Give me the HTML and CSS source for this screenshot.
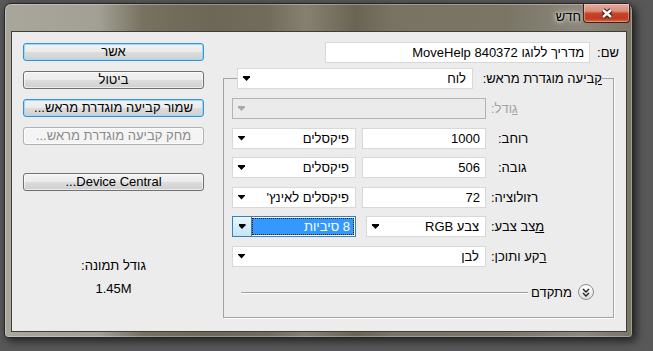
FILE: index.html
```html
<!DOCTYPE html>
<html lang="he" dir="rtl">

<head>
    <meta charset="utf-8">
    <title>חדש</title>
    <link rel="stylesheet" href="styles.css">
</head>

<body>
    <div class="window">
        <div class="titlebar">
            <button class="close" title="סגור">
                <svg width="14" height="11" viewBox="0 0 14 11">
                    <path d="M3 2l8 7M11 2l-8 7" stroke="#3b1a12" stroke-width="4.6" fill="none"/>
                    <path d="M3 2l8 7M11 2l-8 7" stroke="#fff" stroke-width="2.4" fill="none"/>
                </svg>
            </button>
            <span class="title">חדש</span>
        </div>

        <div class="client">
            <div class="panel">
                <div class="name-row">
                    <label for="name">שם:</label>
                    <input type="text" id="name" class="field name" value="מדריך ללוגו 840372 MoveHelp">
                </div>

                <fieldset class="group">
                    <legend class="preset">
                        <label><u>ק</u>ביעה מוגדרת מראש:</label>
                        <div class="select preset-select"><span class="value">לוח</span><span class="arrow"></span></div>
                    </legend>

                    <div class="rows">
                        <div class="row">
                            <label class="lbl disabled"><u>ג</u>ודל:</label>
                            <div class="fields">
                                <div class="select disabled wide"><span class="value"></span><span class="arrow"></span></div>
                            </div>
                        </div>
                        <div class="row">
                            <label class="lbl far">רוחב:</label>
                            <div class="fields">
                                <input type="text" class="field num" value="1000">
                                <div class="select unit"><span class="value">פיקסלים</span><span class="arrow"></span></div>
                            </div>
                        </div>
                        <div class="row">
                            <label class="lbl far">גובה:</label>
                            <div class="fields">
                                <input type="text" class="field num" value="506">
                                <div class="select unit"><span class="value">פיקסלים</span><span class="arrow"></span></div>
                            </div>
                        </div>
                        <div class="row">
                            <label class="lbl">רזולוציה:</label>
                            <div class="fields">
                                <input type="text" class="field num" value="72">
                                <div class="select unit"><span class="value">פיקסלים לאינץ'</span><span class="arrow"></span></div>
                            </div>
                        </div>
                        <div class="row">
                            <label class="lbl"><u>מ</u>צב צבע:</label>
                            <div class="fields">
                                <div class="select mode"><span class="value">צבע RGB</span><span class="arrow"></span></div>
                                <div class="select unit focus"><span class="value">8 סיביות</span><span class="drop"><span class="arrow"></span></span></div>
                            </div>
                        </div>
                        <div class="row">
                            <label class="lbl"><u>ר</u>קע ותוכן:</label>
                            <div class="fields">
                                <div class="select wide"><span class="value">לבן</span><span class="arrow"></span></div>
                            </div>
                        </div>
                    </div>

                    <div class="advanced">
                        <button class="more">
                            <svg width="8" height="9" viewBox="0 0 8 9">
                                <path d="M1 1l3 3 3-3M1 5l3 3 3-3" stroke="#222" stroke-width="1.4" fill="none"/>
                            </svg>
                        </button>
                        <span class="more-text">מתקדם</span>
                        <span class="rule"></span>
                    </div>
                </fieldset>
            </div>

            <div class="actions">
                <button class="btn default">אשר</button>
                <button class="btn">ביטול</button>
                <button class="btn default">שמור קביעה מוגדרת מראש...</button>
                <button class="btn disabled">מחק קביעה מוגדרת מראש...</button>
                <button class="btn device"><span dir="rtl">Device Central...</span></button>

                <div class="size-label">גודל תמונה:</div>
                <div class="size-value">1.45M</div>
            </div>
        </div>
    </div>
</body>

</html>
```

FILE: styles.css
```css
* {
    box-sizing: border-box;
}

body {
    margin: 0;
    height: 351px;
    overflow: hidden;
    background-color: #585858;
    font-family: "Liberation Sans", "DejaVu Sans", sans-serif;
    font-size: 13px;
    color: #000;
}

/* window frame */
.window {
    width: 629px;
    height: 335px;
    margin: 3px auto 0 4px;
    padding: 0 5px 5px 6px;
    display: flex;
    flex-direction: column;
    border: 1px solid #262626;
    border-radius: 7px 7px 4px 4px;
    background: linear-gradient(90deg, #a9a69c 0%, #a29f94 15%, #77725f 22%, #6c6756 33%, #716c5b 42%, #858070 48%, #6a6553 56%, #787363 62%, #7a7565 80%, #8c887b 92%, #7a7565 100%);
    box-shadow: inset 0 0 0 1px rgba(255, 255, 255, 0.3), 3px 3px 8px rgba(0, 0, 0, 0.65);
}

.titlebar {
    height: 27px;
    display: flex;
    align-items: flex-start;
    margin-right: -3px;
}

.close {
    width: 47px;
    height: 19px;
    padding: 0;
    display: flex;
    align-items: center;
    justify-content: center;
    border: 1px solid #4a1c12;
    border-top: none;
    border-radius: 0 0 4px 4px;
    background: linear-gradient(#e4ab9c 0%, #d88e7b 40%, #c8442a 52%, #c03a20 80%, #d5694c 100%);
    box-shadow: inset 0 0 0 1px rgba(255, 255, 255, 0.3);
}

.title {
    padding: 5px 2px 0 0;
    line-height: 15px;
    text-shadow: 0 0 6px #fff, 0 0 3px rgba(255, 255, 255, 0.8);
}

/* dialog body */
.client {
    flex: 1;
    display: flex;
    gap: 19px;
    padding: 10px 0 0 11px;
    background-color: #ececec;
    border: 1px solid #3f3d37;
}

.panel {
    width: 403px;
    padding-right: 7px;
}

.name-row {
    display: flex;
    align-items: center;
    gap: 7px;
    height: 21px;
}

.field {
    height: 21px;
    padding: 0 5px;
    border: 1px solid #d8d8d8;
    background-color: #fff;
    font: inherit;
    color: #000;
    text-align: right;
}

.name {
    width: 265px;
}

.num {
    width: 124px;
}

.group {
    margin: 5px 5px 0 0;
    padding: 9px 11px 17px 8px;
    min-width: 0;
    border: 1px solid #a3a3a3;
    box-shadow: 1px 1px 0 #fff;
}

.preset {
    width: 365px;
    padding: 0;
    display: flex;
    align-items: center;
    justify-content: space-between;
}

.select {
    height: 21px;
    display: flex;
    align-items: center;
    padding: 0 6px 0 5px;
    border: 1px solid #d8d8d8;
    background-color: #fff;
    white-space: nowrap;
}

.select .value {
    flex: 1;
}

.arrow {
    width: 7px;
    height: 5px;
    background-color: #000;
    clip-path: polygon(0 0, 100% 0, 100% 25%, 50% 100%, 0 25%);
}

.preset-select {
    width: 236px;
}

.wide {
    width: 254px;
}

.unit {
    width: 124px;
}

.mode {
    width: 120px;
}

.select.disabled {
    background-color: #ebebeb;
    border-color: #b3b3b3;
}

.select.disabled .arrow {
    background-color: #a9a9a9;
}

.select.focus {
    padding: 0;
    border-color: #3c7fb1;
}

.select.focus .value {
    align-self: stretch;
    margin: 1px 1px 1px 0;
    padding-right: 4px;
    line-height: 17px;
    background-color: #3399ff;
    color: #fff;
    outline: 1px dotted #1a1a1a;
    outline-offset: -1px;
}

.select.focus .drop {
    width: 19px;
    align-self: stretch;
    display: flex;
    align-items: center;
    justify-content: center;
    background: linear-gradient(#eaf6fd, #c2e4f7);
    border-right: 1px solid #3c7fb1;
}

.rows {
    display: flex;
    flex-direction: column;
    gap: 8.5px;
}

.row {
    height: 21px;
    display: flex;
    align-items: center;
    justify-content: flex-end;
    gap: 5px;
}

.lbl.far {
    margin-left: 7px;
}

.lbl.disabled {
    color: #a3a3a3;
}

.fields {
    width: 254px;
    display: flex;
    justify-content: space-between;
}

.advanced {
    height: 16px;
    margin: 17.5px 8px 0 9px;
    display: flex;
    align-items: center;
}

.more {
    width: 16px;
    height: 16px;
    padding: 0;
    display: flex;
    align-items: center;
    justify-content: center;
    border: 1px solid #8d8d8d;
    border-radius: 50%;
    background: linear-gradient(#ffffff, #dcdcdc);
}

.more-text {
    margin: 0 6px 0 3px;
}

.rule {
    flex: 1;
    height: 1px;
    background-color: #a0a0a0;
    box-shadow: 0 1px 0 #fff;
}

/* buttons column */
.actions {
    width: 181px;
    padding-top: 1px;
}

.btn {
    display: block;
    width: 181px;
    height: 18px;
    margin-bottom: 10px;
    padding: 0;
    border: 1px solid #707070;
    border-radius: 3px;
    background: linear-gradient(#f2f2f2 0%, #ebebeb 50%, #dddddd 50%, #cfcfcf 100%);
    box-shadow: inset 0 0 0 1px rgba(255, 255, 255, 0.6);
    font: inherit;
    line-height: 16px;
    color: #000;
}

.btn.default {
    border-color: #3c8fd0;
    box-shadow: inset 0 0 0 1px #97dcf8;
}

.btn.disabled {
    border-color: #adb2b5;
    background: #f4f4f4;
    color: #8a8a8a;
}

.btn.device {
    margin-top: 28px;
}

.size-label,
.size-value {
    text-align: center;
    line-height: 16px;
}

.size-label {
    margin-top: 67px;
}

.size-value {
    margin-top: 7px;
}
```
